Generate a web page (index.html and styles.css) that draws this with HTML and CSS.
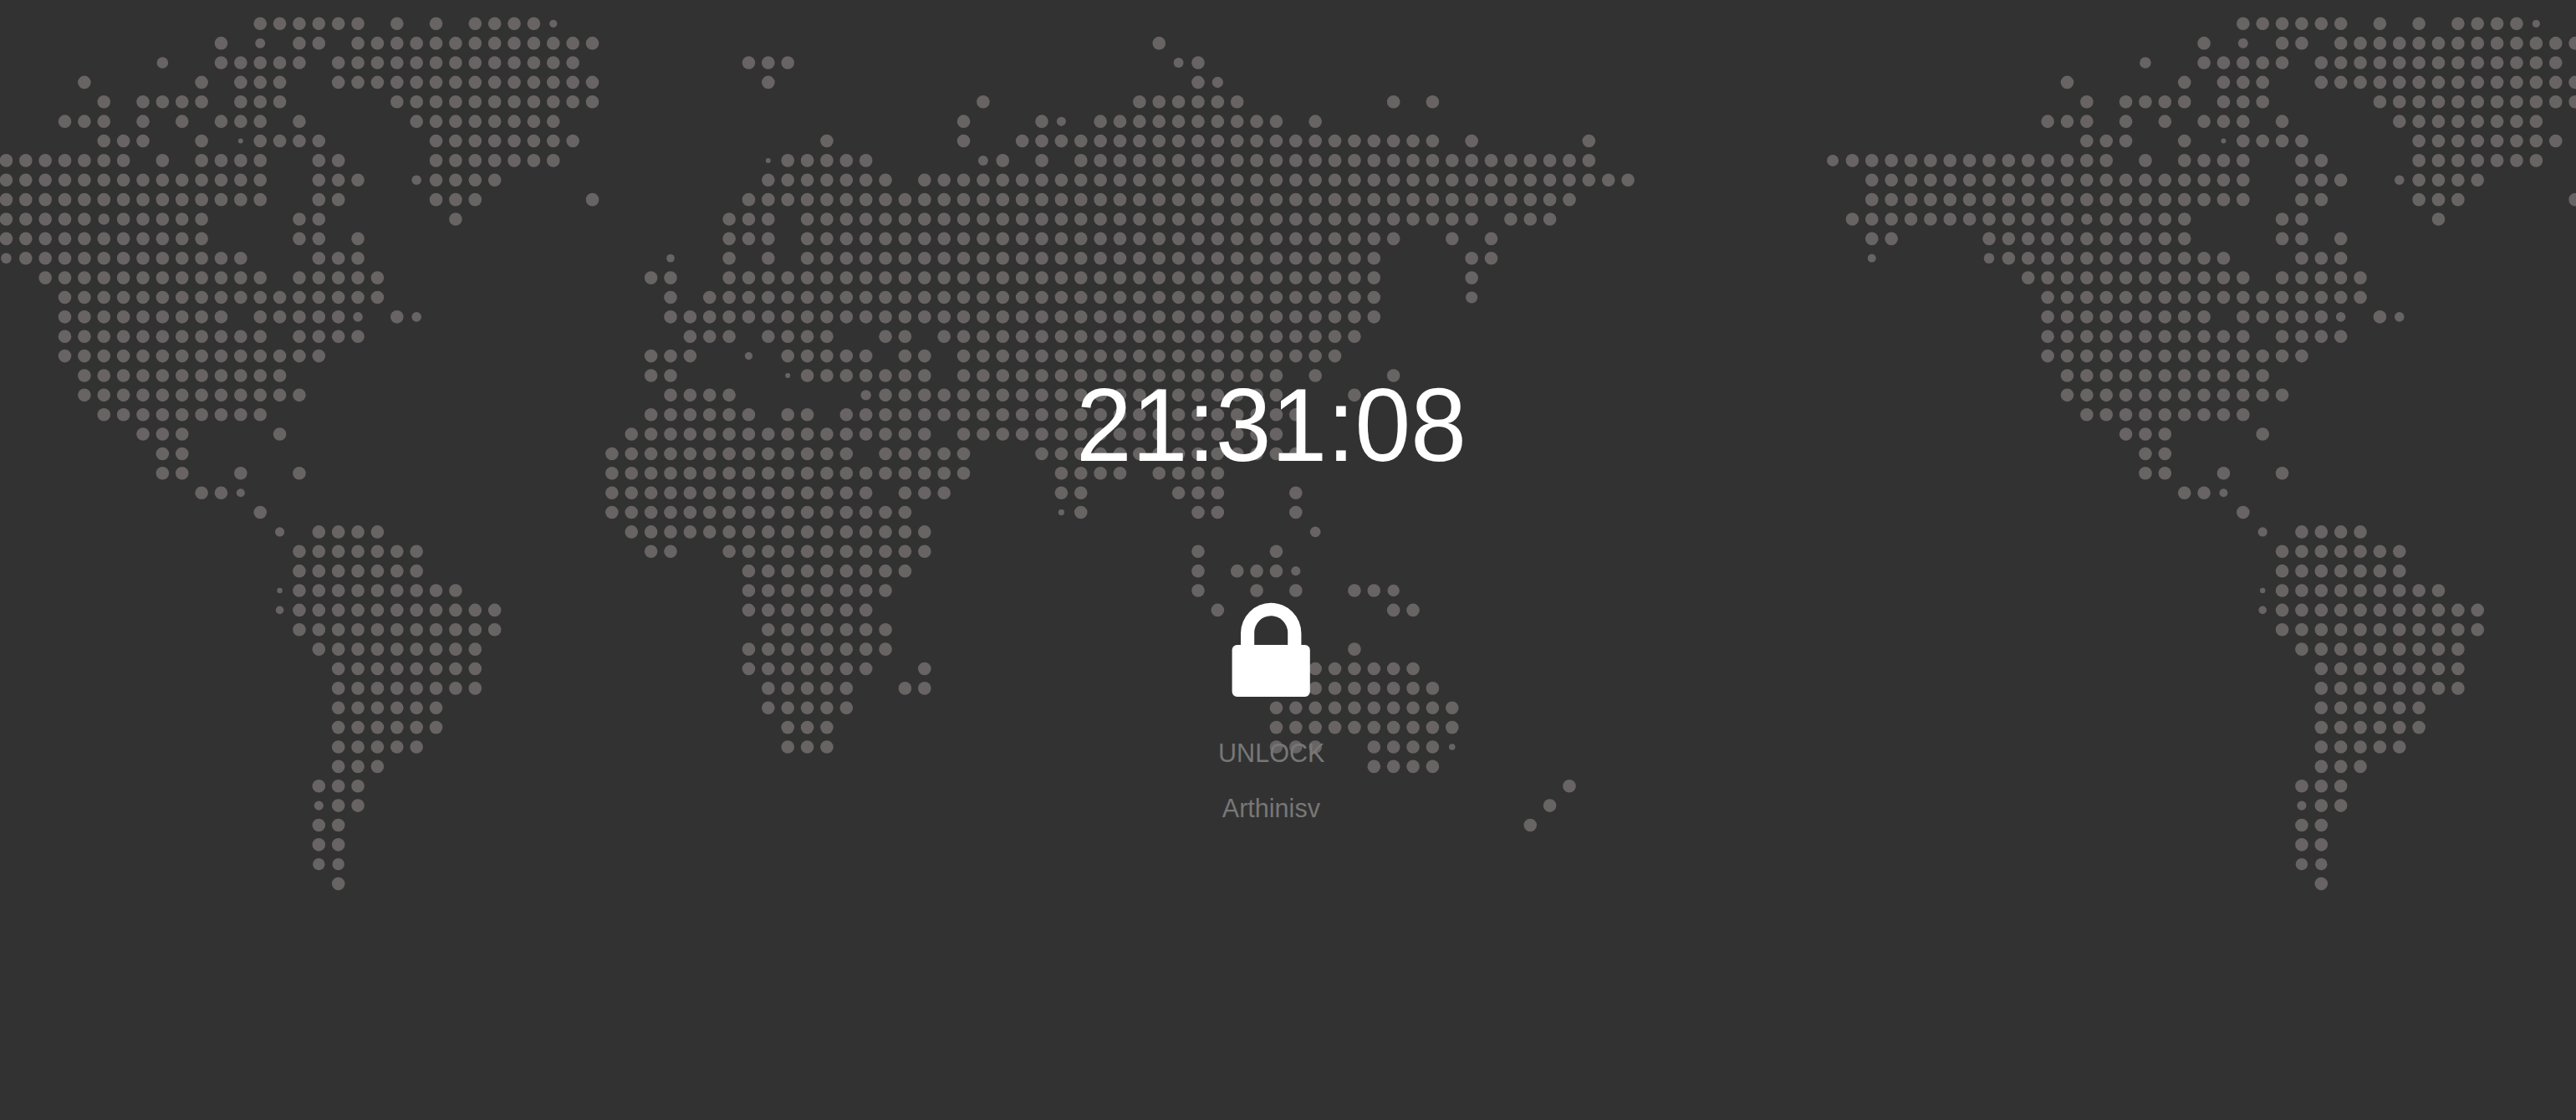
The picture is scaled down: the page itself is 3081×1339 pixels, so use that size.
FILE: index.html
```html
<!DOCTYPE html>
<html lang="en">
<head>
<meta charset="utf-8">
<title>Lock screen</title>
<link rel="stylesheet" href="styles.css">
</head>
<body>
<div class="screen">
  <svg class="map" width="3081" height="1339" viewBox="0 0 3081 1339" aria-hidden="true">
    <defs><g id="world"></g></defs>
    <use href="#world"/>
    <use href="#world" x="2371.6"/>
  </svg>
  <main class="lock">
    <time class="clock">21:31:08</time>
    <button class="unlock" type="button">
      <svg class="padlock" viewBox="0 0 94 114" aria-hidden="true">
        <path d="M.6 57a6 6 0 0 1 6-6H11V37a36.2 36.2 0 0 1 72.4 0V51h4.4a6 6 0 0 1 6 6v50a6 6 0 0 1-6 6H6.600a6 6 0 0 1-6-6ZM27.200 51h40V36.300a20 20 0 0 0-40 0Z"/>
      </svg>
      <span class="label">UNLOCK</span>
    </button>
    <p class="user">Arthinisv</p>
  </main>
</div>
<script src="map.js"></script>
</body>
</html>
```
FILE: styles.css
```css
body {
  margin: 0;
  background: #323232;
  font-family: "Liberation Sans", Arial, sans-serif;
}

.screen {
  position: relative;
  width: 3081px;
  height: 1339px;
  overflow: hidden;
}

.map {
  position: absolute;
  inset: 0;
  fill: #686464;
}

.lock {
  position: relative;
  display: flex;
  flex-direction: column;
  align-items: center;
  width: 3041px;
  padding-top: 441px;
}

.clock {
  color: #fff;
  font-size: 120px;
  line-height: 136px;
  transform: scaleY(1.036);
  transform-origin: 50% 110px;
}

.unlock {
  display: flex;
  flex-direction: column;
  align-items: center;
  margin-top: 143px;
  padding: 0;
  border: 0;
  background: none;
  font: inherit;
}

.padlock {
  width: 94px;
  height: 114px;
  fill: #fff;
}

.label,
.user {
  color: #777;
  font-size: 32px;
  line-height: 36px;
  transform: scaleX(0.955);
}

.label {
  margin-top: 48px;
}

.user {
  margin: 30px 0 0;
}
```
FILE: map.js
```javascript
// Each line is one row of dots: column ranges, with an optional ":radius" for smaller dots.
const rows = [
  "13..18 20 22 24..27 28:4.6",
  "11 13:6 15..16 18..30 59",
  "8:6.8 11..15 17..29 38..40 60:6 61",
  "4 10 12..14 17..30 39 61 62:6.6",
  "5 7..10 12..14 20..30 50 58..63 71 73",
  "3..5 7 9 11..13 15 21..28 49 53 54:5.5 56..65 67",
  "5..7 10 12:3 13..16 22..29 42 49 52..73 75 81",
  "-8:7 -7..6 8 10..13 16..17 22..28 39:3 40..44 50:6 51 53 55..81",
  "-6..13 16..18 21:5.8 22..25 39..45 47..83",
  "-6..13 16..17 22..24 30 38..80",
  "-7..4 5:6.8 6..10 15..16 23 37..39 41..75 77..79",
  "-6..-5 0..10 15..16 18 37..39 41..71 74 76",
  "-6:5 0:6.3 1..12 16..18 34:4.8 37 39 41..70 75..76",
  "2..13 15..19 33..34 37..70 75",
  "3..19 34 36..70 75:7.1",
  "3..11 13..17 18:5.8 20 21:5.8 34..70",
  "3..13 15..18 35..37 39..42 45..46 48..69",
  "3..16 33..35 38:4.6 40..44 46..47 49..68",
  "4..14 33..34 40:3 41..47 49..65 67 71",
  "4..15 34..37 44:6.2 45..65 69",
  "5..13 33..38 40..41 43..66",
  "7..9 14 32..47 49..65",
  "8..9 31..43 45..49 53..66",
  "8..9 12 15 31..49 54..57 59..62",
  "10..11 12:5 31..44 46..48 54..55 60..62 66",
  "13 31..46 54:3.6 55 61..62 66",
  "14:5.6 16..19 32..47 67:6.3",
  "15..21 33..34 37..47 61 65",
  "15..21 38..46 61 63..65 66:5.6",
  "14:3.2 15..23 38..45 61 64 66 69..70 71:7.2",
  "14:4.8 15..25 38..44 62 71..72",
  "15..25 39..45",
  "16..24 38..45 69",
  "17..24 38..44 47 67..72",
  "17..24 39..43 46..47 67..73",
  "17..22 39..43 65..74",
  "17..22 40..42 65..74",
  "17..21 40..42 65..67 70..73 74:3.8",
  "17..19 70..73",
  "16..18 80",
  "16:5.6 17..18 79",
  "16..17 78",
  "16..17",
  "16:7.2 17:7.2",
  "17"
];

const pitch = 23.37;
const world = document.getElementById("world");

rows.forEach((row, r) => {
  for (const item of row.split(" ")) {
    const [range, radius = 7.8] = item.split(":");
    const [first, last = first] = range.split("..").map(Number);
    for (let c = first; c <= last; c++) {
      const dot = document.createElementNS("http://www.w3.org/2000/svg", "circle");
      dot.setAttribute("cx", (7.4 + c * pitch).toFixed(2));
      dot.setAttribute("cy", (28.3 + r * pitch).toFixed(2));
      dot.setAttribute("r", radius);
      world.append(dot);
    }
  }
});
```
